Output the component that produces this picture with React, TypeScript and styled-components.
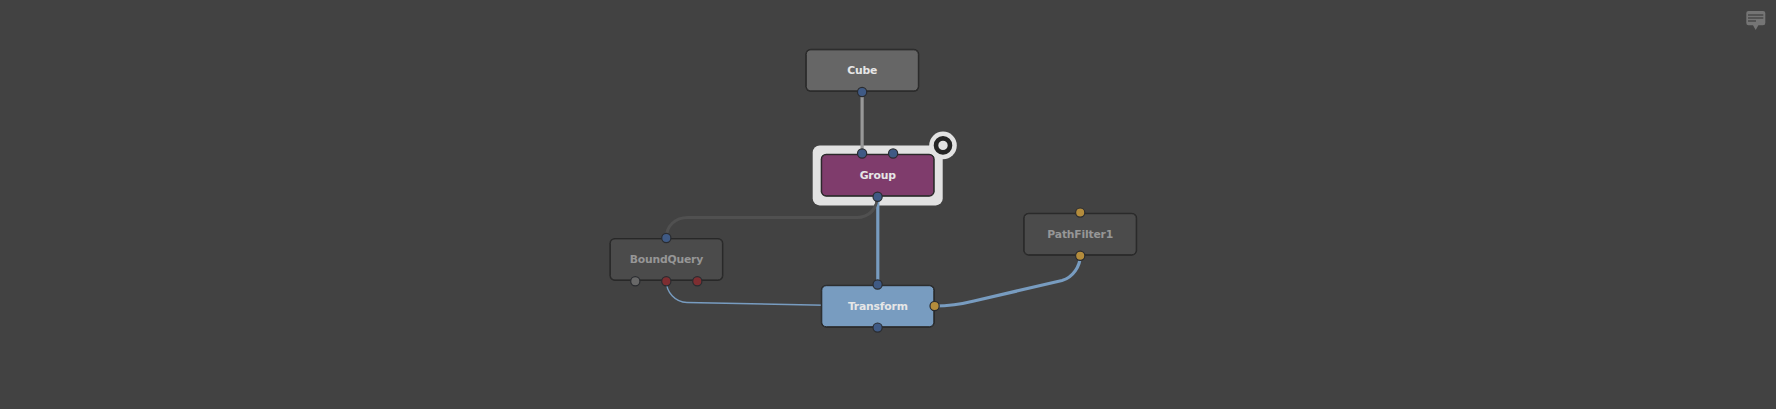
import React from "react";
import styled, { createGlobalStyle } from "styled-components";

const GlobalStyle = createGlobalStyle`
  html, body, #root { margin: 0; height: 100%; overflow: hidden; background: #424242; }
`;

const Canvas = styled.main`
  position: relative;
  width: 100%;
  height: 100vh;
  background: #424242;
  font-family: "DejaVu Sans", sans-serif;
`;

const Wires = styled.svg`
  position: absolute;
  inset: 0;
  width: 100%;
  height: 100%;
  fill: none;
`;

const Halo = styled.div`
  position: absolute;
  left: 0;
  top: 0;
  transform: translate(812.7px, 145.4px);
  width: 130px;
  height: 59.5px;
  border-radius: 7px;
  background: #e2e2e2;
`;

const NodeBox = styled.div<{ $x: number; $y: number; $fill: string; $dim?: boolean }>`
  position: absolute;
  left: 0;
  top: 0;
  transform: translate(${(p) => p.$x}px, ${(p) => p.$y}px);
  box-sizing: border-box;
  width: 113px;
  height: 42px;
  display: flex;
  align-items: center;
  justify-content: center;
  border: 1px solid #292929;
  box-shadow: 0 0 0 0.5px #292929;
  border-radius: 5px;
  background: ${(p) => p.$fill};
  color: ${(p) => (p.$dim ? "#969696" : "#e6e6e6")};
  font-size: 10.8px;
  line-height: 13px;
  letter-spacing: -0.2px;
  font-weight: bold;
`;

const CommentButton = styled.button`
  position: absolute;
  top: 10px;
  right: 10px;
  padding: 0;
  border: 0;
  background: none;
  line-height: 0;
`;

const nodes = [
  { name: "Cube", x: 805.8, y: 49.35, fill: "#666666" },
  { name: "Group", x: 821.2, y: 154.2, fill: "#7f3c6c" },
  { name: "Transform", x: 821.3, y: 285.2, fill: "#789cc0" },
  { name: "BoundQuery", x: 609.9, y: 238.4, fill: "#4b4b4b", dim: true },
  { name: "PathFilter1", x: 1023.7, y: 213.2, fill: "#4b4b4b", dim: true },
];

const BLUE = "#3f5a85";
const AMBER = "#b48c3c";
const RED = "#7e2e31";
const GRAY = "#686868";

const ports: [number, number, string][] = [
  [862.1, 92, BLUE],
  [862.1, 153.5, BLUE],
  [893.1, 153.5, BLUE],
  [877.6, 196.8, BLUE],
  [877.6, 284.5, BLUE],
  [877.6, 327.6, BLUE],
  [934.6, 306, AMBER],
  [666.3, 238, BLUE],
  [635.3, 281.2, GRAY],
  [666.3, 281.2, RED],
  [697.3, 281.2, RED],
  [1080.2, 212.6, AMBER],
  [1080.2, 255.7, AMBER],
];

export default function App() {
  return (
    <>
      <GlobalStyle />
      <Canvas>
        <Halo />
        <Wires>
          <path d="M862.1 92V153" stroke="#989898" strokeWidth="3.2" />
          <path
            d="M877.6 197C877.6 208 869 217.5 857 217.5H688C675 217.5 666.3 226 666.3 238"
            stroke="#505050"
            strokeWidth="3"
          />
          <path d="M877.8 197V285" stroke="#789cc0" strokeWidth="3.2" />
          <path d="M877.2 199C876.5 206 873 211 869 214" stroke="#505050" strokeWidth="2.6" />
          <path d="M666.3 281C666.3 292 675 302.3 687 302.5L825 305.2" stroke="#789cc0" strokeWidth="1.4" />
          <path
            d="M934.6 306C952 306 962 304 974 301L1062 280.5C1073 277.5 1080.2 266 1080.2 256"
            stroke="#789cc0"
            strokeWidth="3.2"
          />
        </Wires>
        {nodes.map((n) => (
          <NodeBox key={n.name} $x={n.x} $y={n.y} $fill={n.fill} $dim={n.dim}>
            {n.name}
          </NodeBox>
        ))}
        <Wires>
          {ports.map(([x, y, color]) => (
            <circle key={`${x}-${y}`} cx={x} cy={y} r="4.6" fill={color} stroke="#2a2c30" strokeWidth="1.2" />
          ))}
          <circle cx="943" cy="145.4" r="13.8" fill="#e2e2e2" />
          <circle cx="943" cy="145.4" r="7" stroke="#242424" strokeWidth="4.6" />
        </Wires>
        <CommentButton aria-label="Comments">
          <svg width="20" height="21" viewBox="0 0 20 21">
            <path
              d="M2.5 1H17Q19.3 1 19.3 3V13Q19.3 15.3 17 15.3H12.4L9.7 20L7 15.3H2.5Q.3 15.3 .3 13V3Q.3 1 2.5 1Z"
              fill="#757575"
            />
            <path d="M2 5H17.3M2 8H17.3M2 11H10" stroke="#4a4a4a" strokeWidth="1.7" />
          </svg>
        </CommentButton>
      </Canvas>
    </>
  );
}
